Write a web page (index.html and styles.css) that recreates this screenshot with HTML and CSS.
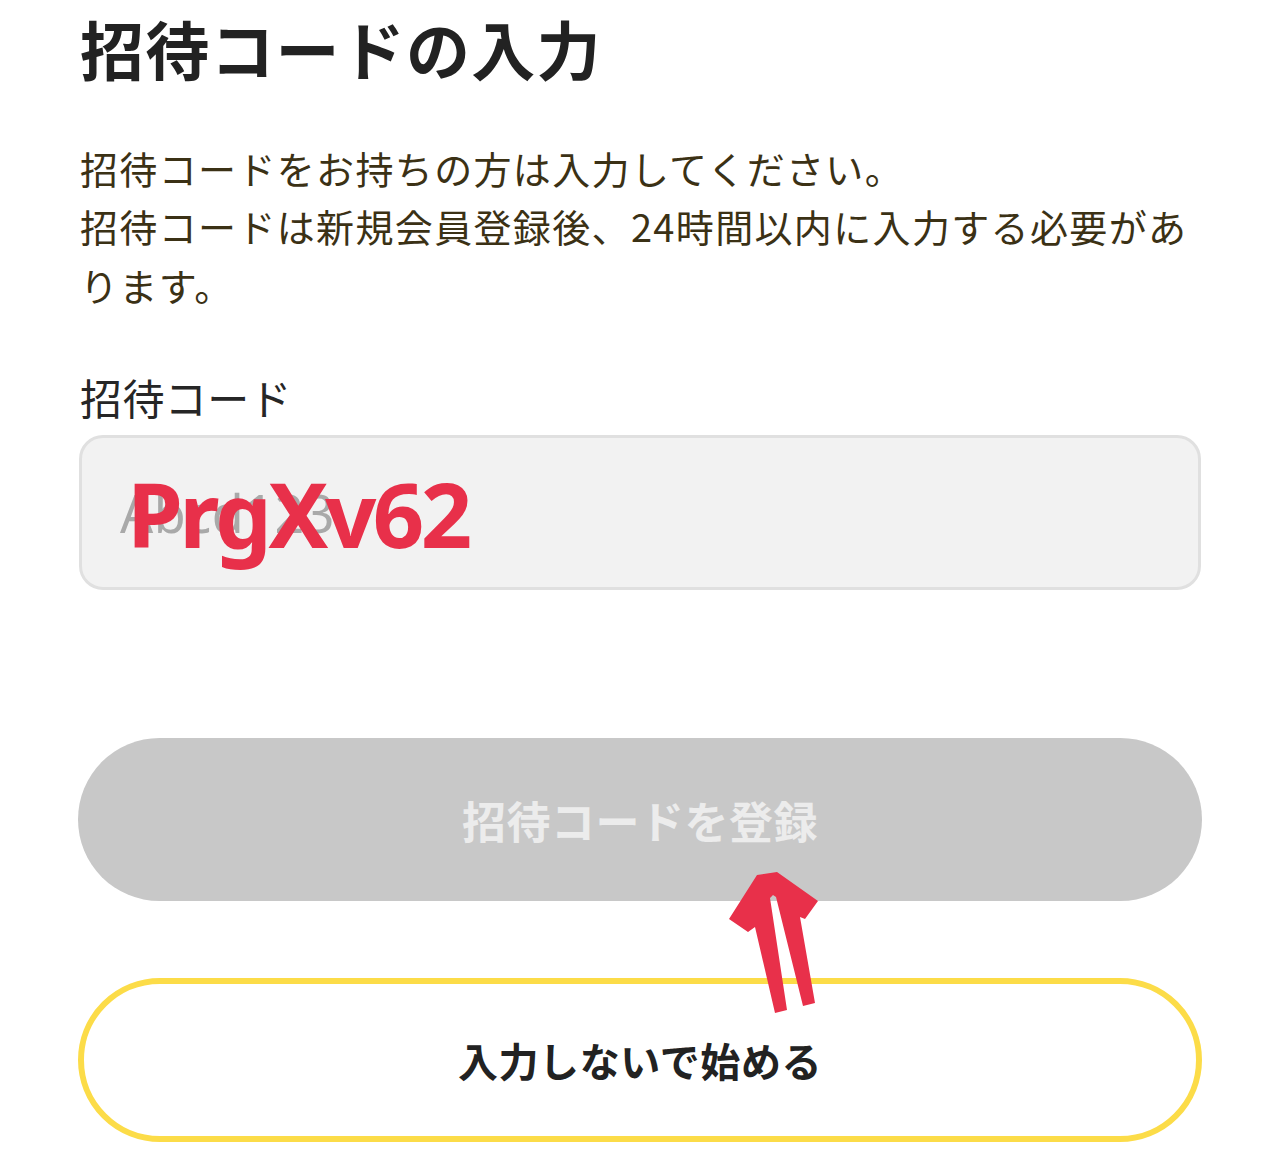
FILE: index.html
```html
<!DOCTYPE html>
<html lang="ja">
<head>
<meta charset="utf-8">
<title>招待コードの入力</title>
<link rel="stylesheet" href="styles.css">
</head>
<body>
<main class="page">
  <h1 class="title">招待コードの入力</h1>
  <p class="lead">招待コードをお持ちの方は入力してください。<br>招待コードは新規会員登録後、24時間以内に入力する必要があります。</p>
  <div class="field">
    <label class="label" for="code">招待コード</label>
    <div class="input" id="code">
      <span class="placeholder">Abcd123</span>
      <span class="annot-code">PrgXv62</span>
    </div>
  </div>
  <button class="btn btn-primary" type="button" disabled>招待コードを登録</button>
  <button class="btn btn-secondary" type="button">入力しないで始める</button>
  <svg class="annot-arrow" viewBox="700 860 140 170" aria-hidden="true">
    <polygon points="757,875 777,872 818,901 805,919 800,917 815,1003 803,1006 776,897 773,895 770,898 787,1010 775,1013 755,927 748,932 729,919" />
  </svg>
</main>
</body>
</html>
```

FILE: styles.css
```css
* { box-sizing: border-box; }

html, body {
  margin: 0;
  padding: 0;
  background: #ffffff;
}

body {
  font-family: "Noto Sans CJK JP", "Noto Sans", sans-serif;
  color: #222222;
}

.page {
  position: relative;
  width: 1280px;
  height: 1161px;
  padding: 9px 80px 0 80px;
  display: flex;
  flex-direction: column;
  overflow: hidden;
}

.title {
  margin: 0;
  font-size: 64px;
  line-height: 76.8px;
  font-weight: 700;
  color: #222222;
  letter-spacing: 1.2px;
}

.lead {
  margin: 53px 0 0 0;
  font-size: 38px;
  line-height: 58.5px;
  font-weight: 400;
  color: #3b3115;
  letter-spacing: 1.35px;
}

.field {
  margin-top: 55px;
  display: flex;
  flex-direction: column;
  gap: 10px;
}

.label {
  font-size: 42px;
  line-height: 56px;
  font-weight: 400;
  color: #262626;
  letter-spacing: 0.4px;
}

.input {
  position: relative;
  height: 155px;
  margin: 0 -1px;
  border: 3px solid #e0e0e0;
  border-radius: 24px;
  background: #f2f2f2;
  display: flex;
  align-items: center;
  padding-left: 38px;
}

.placeholder {
  font-family: "Noto Sans", sans-serif;
  font-size: 52px;
  font-weight: 400;
  color: #a9a9a9;
  letter-spacing: 0.5px;
}

.annot-code {
  position: absolute;
  inset: 0;
  display: flex;
  align-items: center;
  padding-left: 45px;
  font-family: "Noto Sans", sans-serif;
  font-size: 90px;
  font-weight: 700;
  color: #e8304a;
  letter-spacing: -3.6px;
}

.btn {
  margin: 0 -2px;
  border-radius: 999px;
  font-family: "Noto Sans CJK JP", sans-serif;
  font-weight: 700;
  display: flex;
  align-items: center;
  justify-content: center;
  padding: 0;
}

.btn-primary {
  margin-top: 148px;
  height: 163px;
  border: none;
  background: #c8c8c8;
  color: #ececec;
  font-size: 44px;
  letter-spacing: 0.5px;
}

.btn-secondary {
  margin-top: 77px;
  height: 164px;
  border: 6px solid #fcdc48;
  background: #ffffff;
  color: #222222;
  font-size: 40px;
  letter-spacing: 0.6px;
}

.annot-arrow {
  position: absolute;
  left: 700px;
  top: 860px;
  width: 140px;
  height: 170px;
  fill: #e8304a;
  pointer-events: none;
}
```
